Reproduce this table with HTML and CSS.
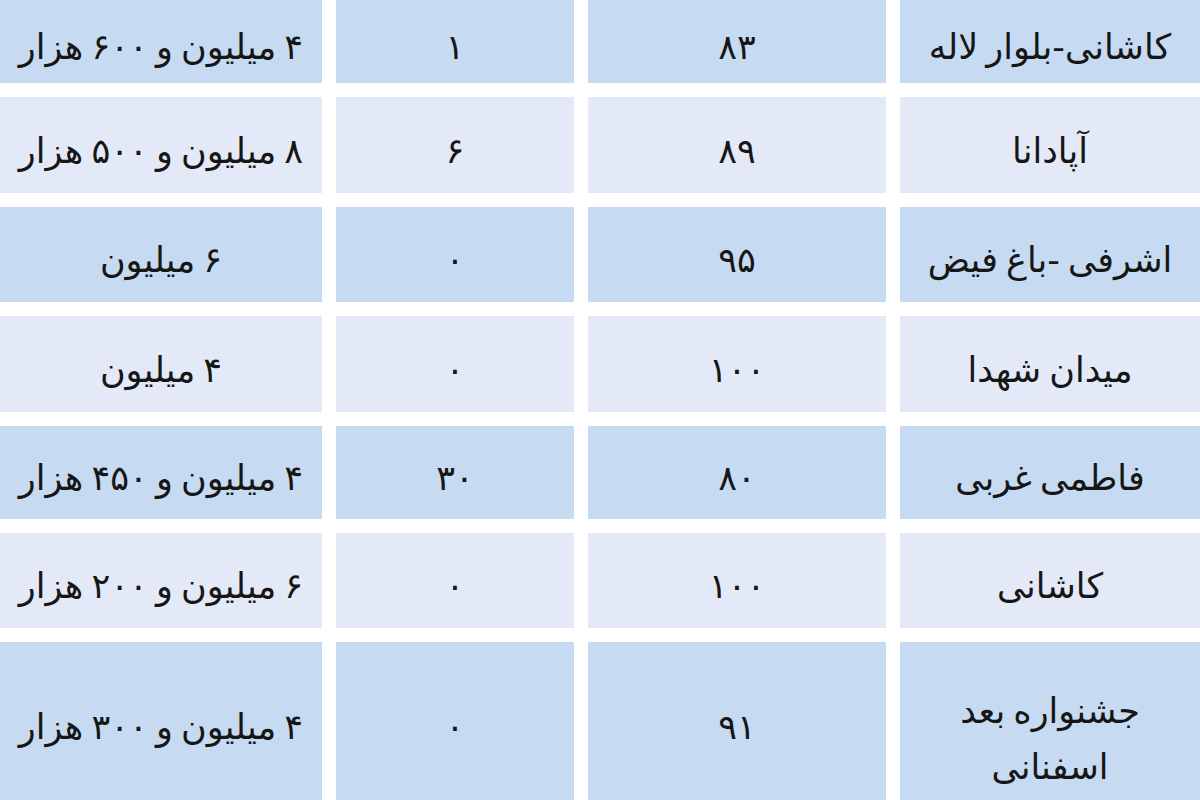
FILE: index.html
```html
<!DOCTYPE html>
<html lang="fa" dir="rtl">
<head>
<meta charset="utf-8">
<title>جدول</title>
<link rel="stylesheet" href="styles.css">
</head>
<body>
<div class="table">
  <div class="cell dark">کاشانی-بلوار لاله</div>
  <div class="cell dark">۸۳</div>
  <div class="cell dark">۱</div>
  <div class="cell dark">۴ میلیون و ۶۰۰ هزار</div>

  <div class="cell light">آپادانا</div>
  <div class="cell light">۸۹</div>
  <div class="cell light">۶</div>
  <div class="cell light">۸ میلیون و ۵۰۰ هزار</div>

  <div class="cell dark">اشرفی -باغ فیض</div>
  <div class="cell dark">۹۵</div>
  <div class="cell dark">۰</div>
  <div class="cell dark">۶ میلیون</div>

  <div class="cell light">میدان شهدا</div>
  <div class="cell light">۱۰۰</div>
  <div class="cell light">۰</div>
  <div class="cell light">۴ میلیون</div>

  <div class="cell dark">فاطمی غربی</div>
  <div class="cell dark">۸۰</div>
  <div class="cell dark">۳۰</div>
  <div class="cell dark">۴ میلیون و ۴۵۰ هزار</div>

  <div class="cell light">کاشانی</div>
  <div class="cell light">۱۰۰</div>
  <div class="cell light">۰</div>
  <div class="cell light">۶ میلیون و ۲۰۰ هزار</div>

  <div class="cell dark multi">جشنواره بعد<br>اسفنانی</div>
  <div class="cell dark">۹۱</div>
  <div class="cell dark">۰</div>
  <div class="cell dark">۴ میلیون و ۳۰۰ هزار</div>
</div>
</body>
</html>
```
FILE: styles.css
```css
html, body {
  margin: 0;
  padding: 0;
  background: #ffffff;
}

body {
  width: 1200px;
  height: 800px;
  overflow: hidden;
  font-family: "DejaVu Sans", "Noto Sans", sans-serif;
  color: #161616;
}

.table {
  display: grid;
  direction: rtl;
  grid-template-columns: 300px 298px 238px 322px;
  grid-template-rows: 83px 96px 95px 96px 93px 95px 158px;
  column-gap: 14px;
  row-gap: 14px;
}

.cell {
  display: flex;
  align-items: center;
  justify-content: center;
  text-align: center;
  font-size: 35px;
  line-height: 1;
  padding-top: 12px;
  white-space: nowrap;
  word-spacing: -3px;
}

.dark {
  background: #c6dbf1;
}

.light {
  background: #e3e9f6;
}

.multi {
  white-space: normal;
  line-height: 56px;
  padding-top: 36px;
}
```
